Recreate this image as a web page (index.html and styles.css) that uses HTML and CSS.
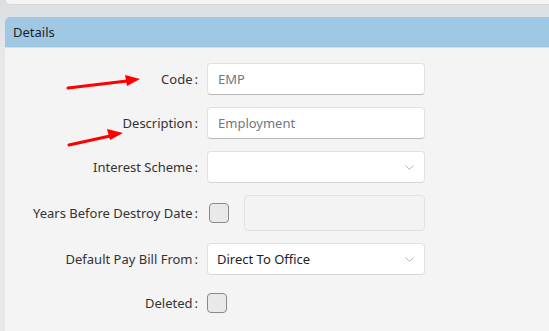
FILE: index.html
```html
<!DOCTYPE html>
<html>
<head>
  <meta charset="UTF-8">
  <title>Details</title>
  <link rel="stylesheet" href="styles.css">
</head>
<body>
  <div class="top-card"></div>

  <div class="panel">
    <div class="panel-header">Details</div>

    <form class="form-grid" onsubmit="event.preventDefault()">
      <label class="lbl" for="code">Code<span class="colon">:</span></label>
      <input class="txt muted" id="code" type="text" value="EMP">

      <label class="lbl" for="desc">Description<span class="colon">:</span></label>
      <input class="txt muted" id="desc" type="text" value="Employment">

      <label class="lbl" for="scheme">Interest Scheme<span class="colon">:</span></label>
      <div class="select">
        <select id="scheme"><option></option></select>
        <svg class="chev" width="9" height="5" viewBox="0 0 9 5"><path d="M0.5 0.5 L4.5 4.3 L8.5 0.5" fill="none" stroke="#b4b4b4" stroke-width="1"/></svg>
      </div>

      <label class="lbl" for="years">Years Before Destroy Date<span class="colon">:</span></label>
      <div class="years-row">
        <span class="check" id="years"></span>
        <input class="txt disabled" type="text" disabled>
      </div>

      <label class="lbl" for="paybill">Default Pay Bill From<span class="colon">:</span></label>
      <div class="select">
        <select id="paybill"><option>Direct To Office</option></select>
        <svg class="chev" width="9" height="5" viewBox="0 0 9 5"><path d="M0.5 0.5 L4.5 4.3 L8.5 0.5" fill="none" stroke="#b4b4b4" stroke-width="1"/></svg>
      </div>

      <label class="lbl" for="deleted">Deleted<span class="colon">:</span></label>
      <div class="check-cell"><span class="check" id="deleted"></span></div>
    </form>

    <!-- red annotation arrows -->
    <svg class="arrows" width="140" height="140" viewBox="0 0 140 140">
      <path d="M63 71 L122 64" stroke="#f00" stroke-width="3" stroke-linecap="round"/>
      <path d="M135 62 L120 58 L122 69 Z" fill="#f00"/>
      <path d="M64 128 L105 119" stroke="#f00" stroke-width="3" stroke-linecap="round"/>
      <path d="M118 116 L102 112 L105 123 Z" fill="#f00"/>
    </svg>
  </div>
</body>
</html>
```

FILE: styles.css
```css
body {
  margin: 0;
  padding: 0 0 0 5px;
  font-family: "Noto Sans", "Open Sans", sans-serif;
  font-size: 13px;
  color: #333;
  background: linear-gradient(to bottom, #dcdfe2, #e6e8ea 60px, #e6e8ea);
  height: 331px;
  overflow: hidden;
}

.top-card {
  height: 4px;
  margin-right: -10px;
  background: #f4f4f4;
  border-bottom: 1px solid #d8d8d8;
  border-left: 1px solid #e0e0e0;
  border-bottom-left-radius: 5px;
  margin-bottom: 12px;
}

.panel {
  position: relative;
  margin-right: -10px;
  background: #f4f4f4;
  border-top-left-radius: 5px;
  height: 320px;
}

.panel-header {
  height: 30px;
  line-height: 31px;
  padding-left: 8px;
  background: #9ec8e4;
  color: #1e1e1e;
  border-top-left-radius: 5px;
  border-bottom: 1px solid #cfe1ef;
}

.form-grid {
  display: grid;
  grid-template-columns: 193px 218px;
  grid-template-rows: 32px 32px 32px 36px 32px 32px;
  column-gap: 9px;
  row-gap: 12px;
  padding-top: 15px;
  margin: 0;
}

.lbl {
  display: flex;
  align-items: center;
  justify-content: flex-end;
  color: #333;
  white-space: nowrap;
}

.colon {
  margin-left: 2px;
}

.txt,
.select select {
  box-sizing: border-box;
  width: 100%;
  height: 32px;
  margin: 0;
  padding: 0 10px;
  font-family: inherit;
  font-size: 13px;
  background: #fff;
  border: 1px solid #e1e1e1;
  border-bottom-color: #b8b8b8;
  border-radius: 4px;
  outline: none;
}

.muted {
  color: #707880;
}

.select {
  position: relative;
}

.select select {
  -webkit-appearance: none;
  appearance: none;
  color: #1e1e1e;
  padding-left: 9px;
  border-bottom-color: #d4d4d4;
}

.chev {
  position: absolute;
  right: 11px;
  top: 14px;
}

.years-row {
  display: flex;
  align-items: center;
  gap: 15px;
}

.years-row .check {
  margin-left: 2px;
}

.txt.disabled {
  flex: 1;
  height: 36px;
  background: #f3f3f3;
  border: 1px solid #e2e2e2;
}

.check {
  display: inline-block;
  box-sizing: border-box;
  width: 20px;
  height: 20px;
  flex: none;
  background: #e9e9e9;
  border: 1.5px solid #8a8a8a;
  border-radius: 4px;
}

.check-cell {
  display: flex;
  align-items: center;
}

/* annotation overlay */
.arrows {
  position: absolute;
  left: 0;
  top: 0;
}
```
